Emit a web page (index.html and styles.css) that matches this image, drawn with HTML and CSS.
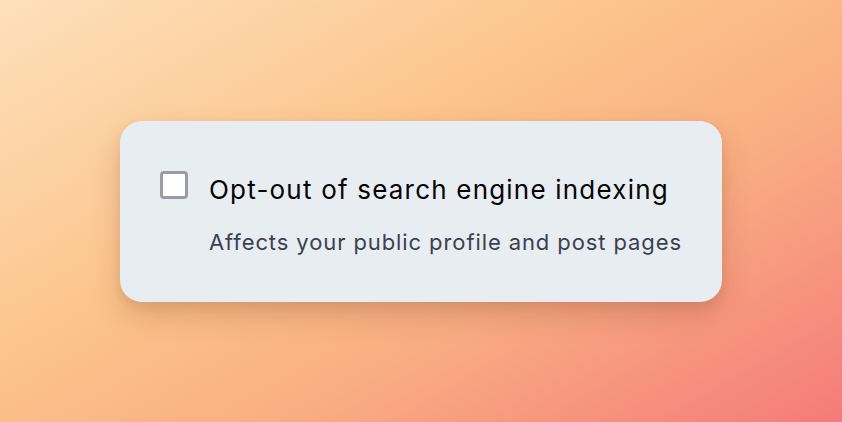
FILE: index.html
```html
<!DOCTYPE html>
<html lang="en">
<head>
    <meta charset="UTF-8">
    <meta name="viewport" content="width=device-width, initial-scale=1.0">
    <title>Indexing setting</title>
    <link rel="stylesheet" href="styles.css">
</head>
<body>

    <div class="setting-card">
        <label class="setting-row" for="noindex">
            <input type="checkbox" id="noindex" class="setting-check">
            <span class="setting-text">
                <span class="setting-title">Opt-out of search engine indexing</span>
                <span class="setting-desc">Affects your public profile and post pages</span>
            </span>
        </label>
    </div>

</body>
</html>
```

FILE: styles.css
```css
* {
    margin: 0;
    padding: 0;
    box-sizing: border-box;
}

html, body {
    height: 100%;
}

body {
    font-family: Inter, 'Noto Sans', sans-serif;
    display: flex;
    justify-content: center;
    align-items: center;
    background: linear-gradient(150deg, #fde0bb 0%, #fcc48c 40%, #f9ad82 65%, #f47b7a 100%);
    overflow: hidden;
}

.setting-card {
    width: 602px;
    height: 181px;
    padding: 50px 40px 0 40px;
    background-color: #e8edf2;
    border-radius: 22px;
    box-shadow: 0 14px 28px rgba(120, 60, 30, 0.22), 0 4px 10px rgba(120, 60, 30, 0.08);
}

.setting-row {
    display: flex;
    align-items: flex-start;
    gap: 21px;
    cursor: pointer;
}

.setting-check {
    appearance: none;
    -webkit-appearance: none;
    flex: none;
    width: 28px;
    height: 28px;
    background-color: #fff;
    border: 3px solid #9b9ba6;
    border-radius: 4px;
    cursor: pointer;
}

.setting-text {
    display: flex;
    flex-direction: column;
    gap: 22px;
    margin-top: 3px;
}

.setting-title {
    font-size: 26px;
    line-height: 32px;
    letter-spacing: 1.2px;
    color: #050505;
    font-weight: 400;
}

.setting-desc {
    font-size: 22px;
    line-height: 28px;
    letter-spacing: 0.9px;
    color: #3a4150;
}
```
